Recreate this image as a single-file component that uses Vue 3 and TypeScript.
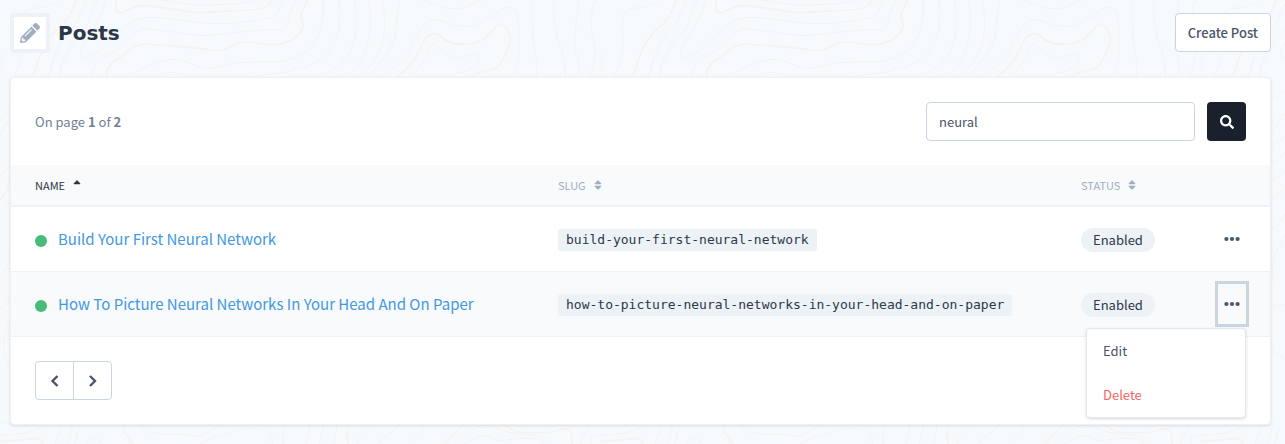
<script setup lang="ts">
import { ref } from 'vue'

interface Post {
  name: string
  slug: string
  status: string
}

const posts: Post[] = [
  { name: 'Build Your First Neural Network', slug: 'build-your-first-neural-network', status: 'Enabled' },
  {
    name: 'How To Picture Neural Networks In Your Head And On Paper',
    slug: 'how-to-picture-neural-networks-in-your-head-and-on-paper',
    status: 'Enabled',
  },
]

const search = ref('neural')
const openMenu = ref<number | null>(1)

function toggleMenu(index: number): void {
  openMenu.value = openMenu.value === index ? null : index
}

const sortUp = 'M296 183L177 64c-9.4-9.4-24.6-9.4-33.9 0L24 183c-15.1 15.1-4.4 41 17 41h238c21.4 0 32.1-25.9 17-41z'
const sortDown = 'M41 288h238c21.4 0 32.1 25.9 17 41L177 448c-9.4 9.4-24.6 9.4-33.9 0L24 329c-15.1-15.1-4.4-41 17-41z'
</script>

<template>
  <div class="page">
    <!-- Repeating contour lines behind the content -->
    <svg class="topography" width="100%" height="100%" aria-hidden="true">
      <defs>
        <pattern id="contours" width="600" height="600" patternUnits="userSpaceOnUse" viewBox="0 0 1800 1800">
          <g fill="none" stroke="#f1f3f5" stroke-width="3">
            <path d="M260 0C250 30 235 50 225 75C190 110 165 150 145 230" />
            <path d="M290 0C265 50 270 70 255 90C210 135 185 170 180 230" />
            <path d="M317 0C305 50 270 100 242 155C236 172 255 178 280 165C330 135 370 60 440 52C510 52 560 65 600 68C700 78 760 60 820 53C832 40 840 20 850 0" />
            <path d="M275 230C275 180 330 170 350 150C390 110 410 85 440 86C500 90 550 105 600 106C680 108 720 88 830 90C872 88 860 60 870 40L885 0" />
            <path d="M485 0C530 5 560 14 600 15C680 14 740 12 760 0" />
            <path d="M390 230C440 195 490 178 520 178C560 180 590 204 630 206C670 200 700 187 730 187L840 185C930 170 975 120 968 0" />
            <path d="M485 228Q515 205 565 230M750 230C850 222 920 205 960 180C1020 130 1025 60 1015 0" />
            <path d="M965 230C1040 190 1070 140 1068 60L1065 0M1040 230C1100 180 1120 120 1107 0M1070 230C1150 180 1165 100 1147 0M1100 230C1180 160 1190 120 1196 0" />
            <path d="M1150 230C1220 175 1220 165 1240 130C1255 90 1275 65 1300 58C1330 60 1360 80 1400 79C1460 75 1490 25 1530 22C1560 25 1555 80 1557 150Q1555 220 1530 230" />
            <path d="M1235 228C1285 180 1280 135 1302 133C1325 150 1340 175 1375 174C1410 165 1430 155 1438 180C1438 195 1400 213 1345 230" />
            <path d="M1265 0C1310 10 1330 28 1370 26C1400 25 1410 8 1445 0" />
            <path d="M1597 0C1595 60 1600 100 1600 130C1605 160 1612 180 1610 230M1662 0C1658 60 1670 110 1680 135C1695 180 1698 200 1696 230M1736 0C1732 60 1718 120 1725 155C1742 180 1738 200 1736 230" />
            <path d="M-10 0C-30 50 -28 80 -20 120C-5 160 -20 190 -30 230M180 0C150 20 130 25 100 24C60 35 68 60 68 130C70 170 55 200 42 230M0 160Q12 190 0 225M1788 0C1765 50 1772 80 1780 120C1795 160 1780 190 1770 230" />
            <path d="M0 365L95 240M0 405C30 350 70 300 95 280M0 525L60 475M215 300L270 265M215 400Q235 360 265 330M215 440L270 400M215 490Q240 480 260 450M0 640L35 600M0 830Q40 790 35 700M0 930L30 900M0 1020L35 990M30 960Q-10 1050 35 1110M220 540Q270 510 280 480M215 600Q270 560 270 520M215 690Q260 660 270 600M225 850Q200 780 260 700M215 910Q250 930 270 900M215 1050Q270 1080 275 1120M0 1265Q30 1272 80 1275" />
            <g transform="scale(3)" stroke-width="1">
              <path d="M62 425L55 444M73 425L68 444M80 425L75 444M87 444Q92 432 103 444M142 425Q144 434 165 434Q185 434 200 436L221 425M200 444C227 431 241 429 252 428C272 430 274 438 272 444M284 425L283 444M310 425L306 444M324 425L319 444M337 425L334 444M372 427C355 436 356 440 358 444M400 425L377 444M423 425Q420 436 408 444M455 444C475 425 485 422 495 427C518 439 550 430 543 444M465 444C484 430 489 437 500 441Q540 434 544 444M589 425L580 444M591 444C589 431 615 436 642 426M0 435Q28 436 42 426" />
            </g>
          </g>
          <g fill="none" stroke="#f3f3f4" stroke-width="5">
            <path d="M350 0L348 30Q350 42 370 36Q400 20 430 17C500 20 540 36 600 38L740 30Q810 30 814 0M922 0Q910 30 903 40C900 60 918 70 905 90Q880 130 820 135C770 132 740 120 715 127C680 145 670 152 640 150C560 140 500 138 440 132C400 132 390 150 360 172C335 190 320 195 320 230M230 0C215 40 200 65 180 80C140 115 120 150 100 230" />
            <path d="M1190 230C1260 180 1250 155 1270 125C1285 100 1305 95 1320 108C1350 135 1360 133 1410 133C1480 115 1475 80 1503 71C1525 80 1535 115 1530 130C1515 160 1510 190 1485 207C1450 213 1435 215 1415 230" />
            <path d="M1050 1275C1035 1299 1041 1320 1044 1332M1389 1275L1329 1332M1518 1278C1551 1302 1560 1296 1632 1299C1695 1293 1716 1260 1716 1332M0 1325L90 1317Q125 1312 132 1332M368 1260C366 1300 390 1315 400 1332M0 600Q30 570 32 500" />
          </g>
        </pattern>
      </defs>
      <rect width="100%" height="100%" fill="url(#contours)" />
    </svg>

    <header class="heading">
      <span class="heading-icon">
        <svg viewBox="0 0 512 512" width="20" height="20" aria-hidden="true">
          <path
            fill="currentColor"
            d="M497.9 142.1l-46.1 46.1c-4.7 4.7-12.3 4.7-17 0l-111-111c-4.7-4.7-4.7-12.3 0-17l46.1-46.1c18.7-18.7 49.1-18.7 67.9 0l60.1 60.1c18.8 18.7 18.8 49.1 0 67.9zM284.2 99.8L21.6 362.4.4 483.9c-2.9 16.4 11.4 30.6 27.8 27.8l121.5-21.3 262.6-262.6c4.7-4.7 4.7-12.3 0-17l-111-111c-4.8-4.7-12.4-4.7-17.1 0zM124.1 339.9c-5.5-5.5-5.5-14.3 0-19.8l154-154c5.5-5.5 14.3-5.5 19.8 0s5.5 14.3 0 19.8l-154 154c-5.5 5.5-14.3 5.5-19.8 0zM88 424h48v36.3l-64.5 11.3-31.1-31.1L51.7 376H88v48z"
          />
        </svg>
      </span>
      <h1>Posts</h1>
      <button type="button" class="create">Create Post</button>
    </header>

    <main class="card">
      <div class="toolbar">
        <p class="count">On page <strong>1</strong> of <strong>2</strong></p>
        <form class="search" @submit.prevent>
          <input v-model="search" type="text" aria-label="Search posts" />
          <button type="submit" aria-label="Search">
            <svg viewBox="0 0 512 512" width="14" height="14" aria-hidden="true">
              <path
                fill="currentColor"
                d="M505 442.7L405.3 343c-4.5-4.5-10.6-7-17-7H372c27.6-35.3 44-79.7 44-128C416 93.1 322.9 0 208 0S0 93.1 0 208s93.1 208 208 208c48.3 0 92.7-16.4 128-44v16.3c0 6.4 2.5 12.5 7 17l99.7 99.7c9.4 9.4 24.6 9.4 33.9 0l28.3-28.3c9.4-9.4 9.4-24.6.1-34zM208 336c-70.7 0-128-57.2-128-128 0-70.7 57.2-128 128-128 70.7 0 128 57.2 128 128 0 70.7-57.2 128-128 128z"
              />
            </svg>
          </button>
        </form>
      </div>

      <table>
        <thead>
          <tr>
            <th class="col-wide" scope="col" aria-sort="ascending">
              <button type="button" class="sort active">
                NAME
                <svg viewBox="0 0 320 512" width="8" height="12" aria-hidden="true"><path fill="currentColor" :d="sortUp" /></svg>
              </button>
            </th>
            <th class="col-wide" scope="col">
              <button type="button" class="sort">
                SLUG
                <svg viewBox="0 0 320 512" width="8" height="12" aria-hidden="true"><path fill="currentColor" :d="sortUp + sortDown" /></svg>
              </button>
            </th>
            <th scope="col">
              <button type="button" class="sort">
                STATUS
                <svg viewBox="0 0 320 512" width="8" height="12" aria-hidden="true"><path fill="currentColor" :d="sortUp + sortDown" /></svg>
              </button>
            </th>
            <th class="col-actions" scope="col" aria-label="Actions"></th>
          </tr>
        </thead>
        <tbody>
          <tr v-for="(post, index) in posts" :key="post.slug">
            <td>
              <div class="name">
                <span class="dot"></span>
                <a href="#">{{ post.name }}</a>
              </div>
            </td>
            <td class="tagged"><code>{{ post.slug }}</code></td>
            <td class="tagged"><span class="badge">{{ post.status }}</span></td>
            <td class="col-actions">
              <div class="actions">
                <button
                  type="button"
                  class="more"
                  :class="{ open: openMenu === index }"
                  :aria-expanded="openMenu === index"
                  aria-label="Post actions"
                  @click="toggleMenu(index)"
                >
                  <svg viewBox="0 0 16 6" width="16" height="6" aria-hidden="true">
                    <g fill="currentColor"><circle cx="2.4" cy="3" r="2.1" /><circle cx="8" cy="3" r="2.1" /><circle cx="13.6" cy="3" r="2.1" /></g>
                  </svg>
                </button>
                <div v-if="openMenu === index" class="menu">
                  <button type="button">Edit</button>
                  <button type="button" class="danger">Delete</button>
                </div>
              </div>
            </td>
          </tr>
        </tbody>
      </table>

      <nav class="pager" aria-label="Pagination">
        <button type="button" aria-label="Previous page">
          <svg viewBox="0 0 12 14" width="12" height="14" aria-hidden="true"><path d="M8.5 2L3.5 7l5 5" /></svg>
        </button>
        <button type="button" aria-label="Next page">
          <svg viewBox="0 0 12 14" width="12" height="14" aria-hidden="true"><path d="M3 2l5 5-5 5" /></svg>
        </button>
      </nav>
    </main>
  </div>
</template>

<style>
body {
  background: #f7fafc;
}
</style>

<style scoped>
* {
  box-sizing: border-box;
}

.page {
  position: relative;
  min-height: 100vh;
  padding: 13px 14px 19px 10px;
  overflow: hidden;
  color: #2d3748;
  font-family: 'Noto Sans CJK SC', 'Open Sans', sans-serif;
  font-size: 13px;
  line-height: 20px;
}

.topography {
  position: absolute;
  inset: 0;
}

button,
input {
  margin: 0;
  padding: 0;
  border: 0;
  background: none;
  color: inherit;
  font: inherit;
}

button {
  cursor: pointer;
}

svg {
  display: block;
}

.heading {
  position: relative;
  display: flex;
  align-items: flex-start;
  margin-bottom: 24px;
}

.heading-icon {
  display: grid;
  place-items: center;
  width: 40px;
  height: 40px;
  margin-right: 8px;
  border: 4px solid #edf2f7;
  border-radius: 4px;
  background: #fff;
  color: #a0aec0;
}

h1 {
  flex: 1;
  margin: 0;
  font-family: 'DejaVu Sans', sans-serif;
  font-size: 20px;
  font-weight: 700;
  line-height: 40px;
}

.create {
  height: 39px;
  padding: 0 12px;
  border: 1px solid #cbd5e0;
  border-radius: 4px;
  background: #fff;
  color: #4a5568;
  font-weight: 500;
}

.card {
  position: relative;
  border: 1px solid #edf2f7;
  border-radius: 4px;
  background: #fff;
  box-shadow: 0 1px 3px rgba(0, 0, 0, 0.12);
}

.toolbar {
  display: flex;
  align-items: center;
  justify-content: space-between;
  padding: 24px;
}

.count {
  margin: 0;
  color: #718096;
}

.search {
  display: flex;
  gap: 12px;
}

.search input {
  width: 269px;
  height: 39px;
  padding: 0 12px;
  border: 1px solid #cbd5e0;
  border-radius: 4px;
  background: #fff;
  color: #4a5568;
}

.search button {
  display: grid;
  place-items: center;
  width: 39px;
  height: 39px;
  border-radius: 4px;
  background: #1a202c;
  color: #fff;
}

table {
  width: 100%;
  border-collapse: separate;
  border-spacing: 0;
  table-layout: fixed;
}

th,
td {
  padding: 0 0 0 24px;
  text-align: left;
  vertical-align: middle;
}

th {
  height: 42px;
  border-bottom: 2px solid #edf2f7;
  background: #f8fafc;
  font-weight: 400;
}

.col-wide {
  width: 523px;
}

.col-actions {
  width: 80px;
  padding: 0 21px 0 0;
}

.sort {
  display: flex;
  align-items: center;
  gap: 8px;
  color: #a0aec0;
  font-size: 11px;
  line-height: 16px;
}

.sort.active {
  color: #2d3748;
}

td {
  height: 65px;
  border-bottom: 1px solid #edf2f7;
}

.tagged {
  padding-top: 2px;
}

tbody tr:nth-child(even) {
  background: #f8fafc;
}

.name {
  display: flex;
  align-items: center;
  gap: 11px;
}

.dot {
  flex: none;
  width: 12px;
  height: 12px;
  margin-top: 3px;
  border-radius: 50%;
  background: #48bb78;
}

.name a {
  color: #4299e1;
  font-size: 15px;
  line-height: 24px;
  text-decoration: none;
}

code {
  display: inline-block;
  padding: 1px 8px;
  border-radius: 3px;
  background: #edf2f7;
  color: #2d3748;
  font-family: 'DejaVu Sans Mono', monospace;
  font-size: 13px;
  line-height: 20px;
  vertical-align: middle;
}

.badge {
  display: inline-block;
  padding: 2px 12px;
  border-radius: 12px;
  background: #edf2f7;
}

.actions {
  position: relative;
  display: flex;
  justify-content: flex-end;
}

.more {
  display: grid;
  place-items: center;
  width: 34px;
  height: 46px;
  border: 3px solid transparent;
  color: #4a5568;
}

.more.open {
  border-color: #cbd5e0;
}

.menu {
  position: absolute;
  z-index: 1;
  top: 100%;
  right: 3px;
  width: 160px;
  margin-top: 1px;
  border: 1px solid #e2e8f0;
  border-radius: 4px;
  background: #fff;
  box-shadow: 0 1px 3px rgba(0, 0, 0, 0.15);
}

.menu button {
  display: block;
  width: 100%;
  padding: 12px 16px;
  color: #4a5568;
  text-align: left;
}

.menu .danger {
  color: #f56565;
}

.pager {
  display: flex;
  padding: 24px;
}

.pager button {
  display: grid;
  place-items: center;
  width: 39px;
  height: 39px;
  border: 1px solid #cbd5e0;
  border-radius: 4px 0 0 4px;
  color: #4a5568;
}

.pager button + button {
  margin-left: -1px;
  border-radius: 0 4px 4px 0;
}

.pager path {
  fill: none;
  stroke: currentColor;
  stroke-width: 2.4;
}
</style>
